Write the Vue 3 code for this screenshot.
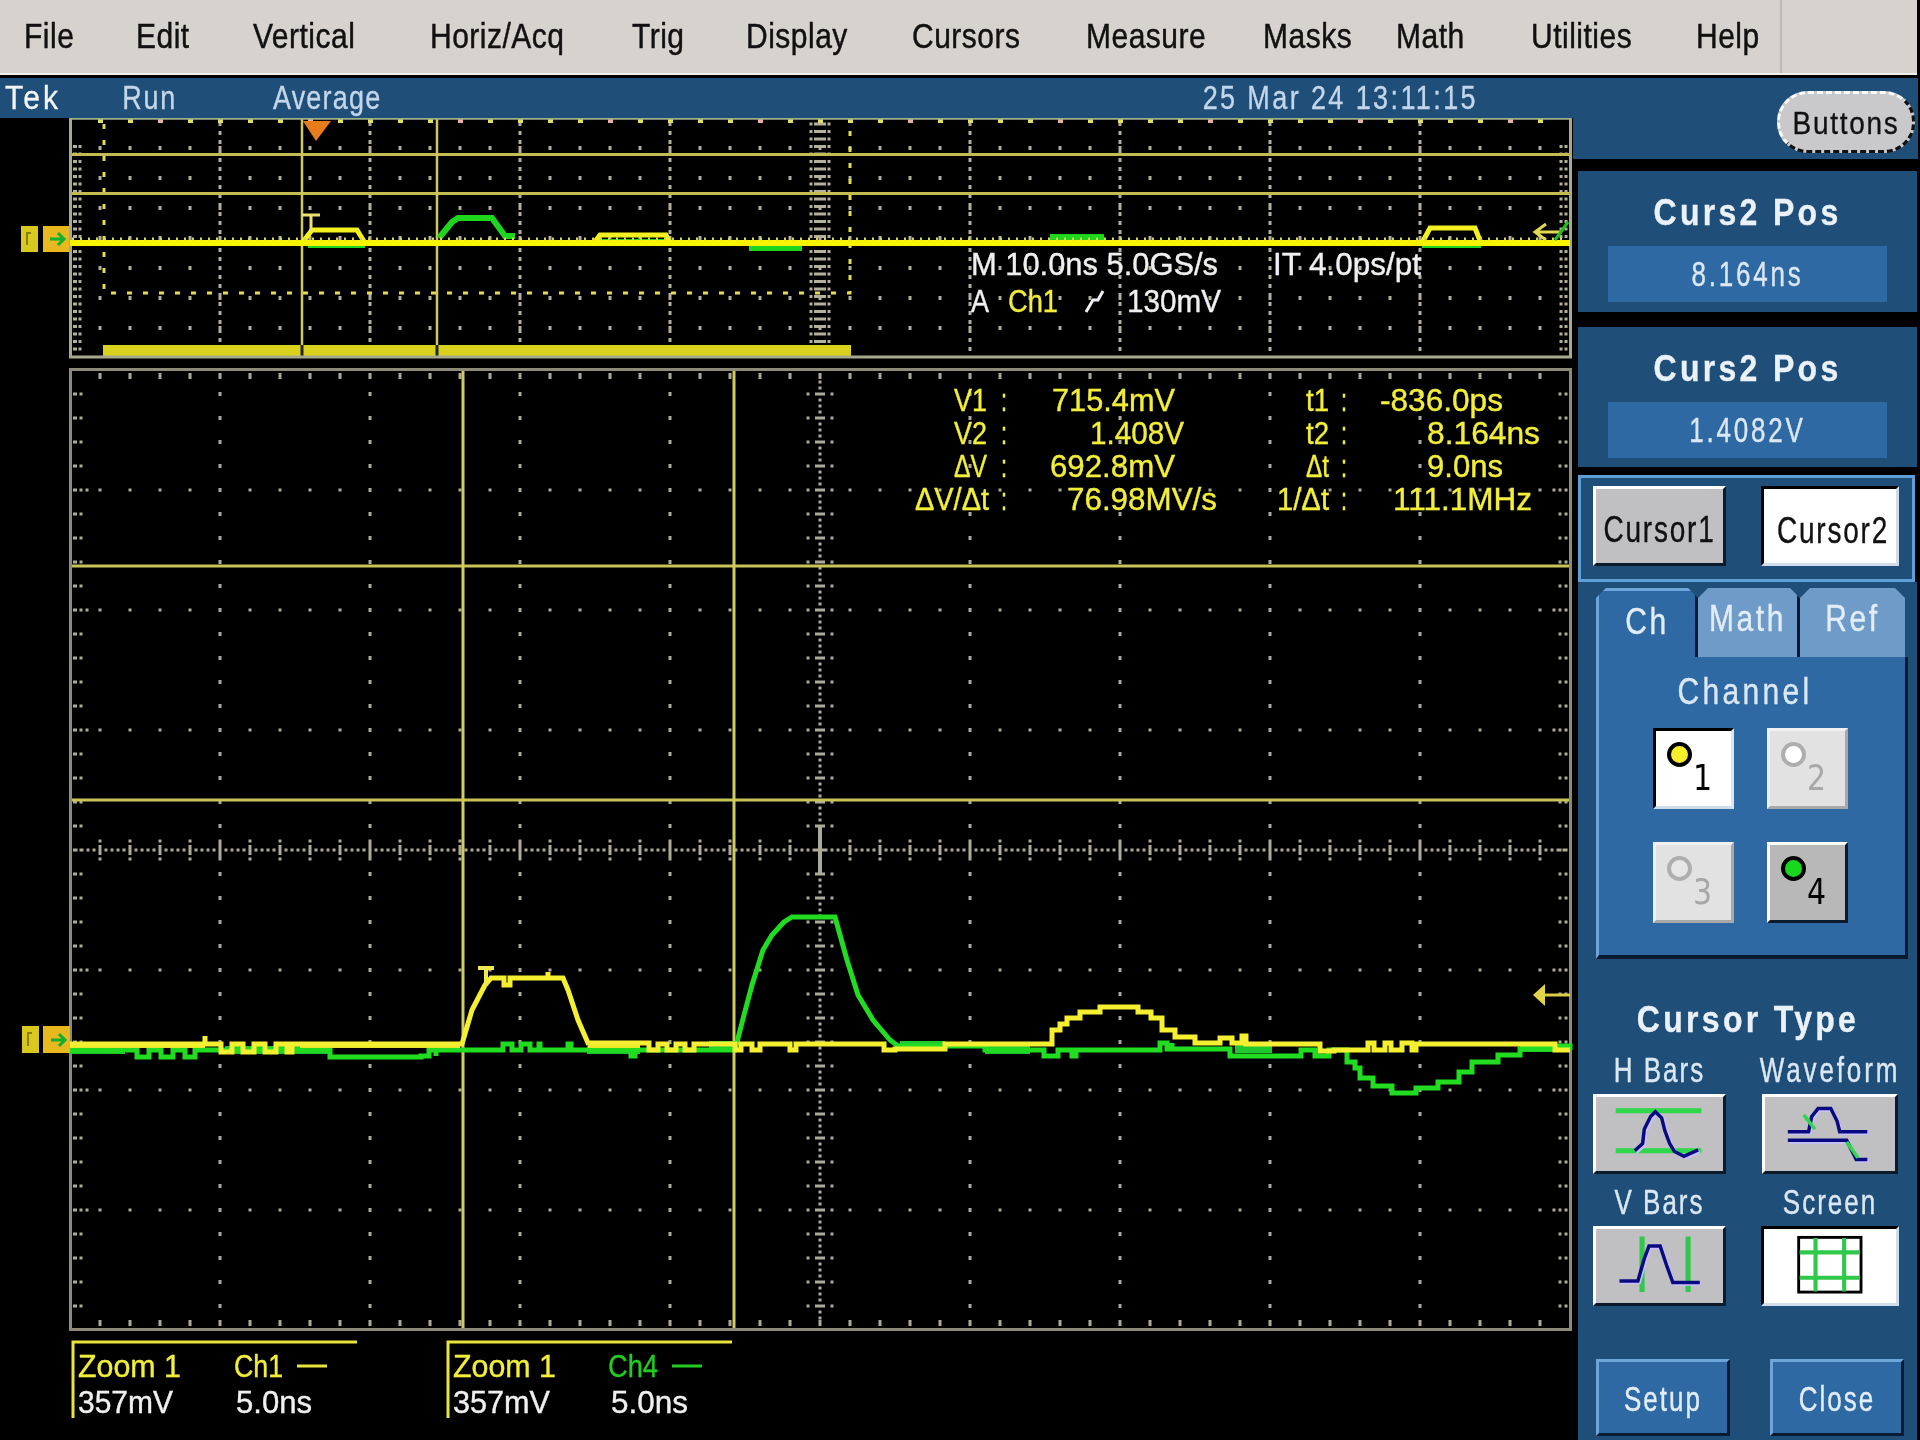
<script setup>
const menuItems = [
  { label: 'File', gap: 24, width: 47 },
  { label: 'Edit', gap: 65, width: 53 },
  { label: 'Vertical', gap: 64, width: 105 },
  { label: 'Horiz/Acq', gap: 72, width: 136 },
  { label: 'Trig', gap: 66, width: 52 },
  { label: 'Display', gap: 62, width: 103 },
  { label: 'Cursors', gap: 63, width: 111 },
  { label: 'Measure', gap: 63, width: 124 },
  { label: 'Masks', gap: 53, width: 87 },
  { label: 'Math', gap: 46, width: 70 },
  { label: 'Utilities', gap: 65, width: 101 },
  { label: 'Help', gap: 64, width: 62 }
]

const range = (a, b, s) => {
  const out = []
  for (let v = a; v <= b + 0.01; v += s) out.push(v)
  return out
}
const dot = (x, y, w = 3, h = 3) => `M${x - w / 2} ${y - h / 2}h${w}v${h}h${-w}z`

// top (overview) graticule
const topDots = (() => {
  let d = ''
  for (const y of range(148, 328, 30)) {
    for (const x of range(100, 1550, 30)) d += dot(x, y, 3, 4)
  }
  for (const x of range(70, 1570, 150)) {
    if (x === 70 || x === 1570 || x === 820) continue
    for (const y of range(124, 354, 9)) d += dot(x, y, 3, 4)
  }
  for (const y of range(124, 352, 7.5)) {
    if (y > 145) {
      d += dot(75, y, 4, 3) + dot(80, y, 3, 3)
      d += dot(1561, y, 3, 3) + dot(1566, y, 3, 3)
    }
    d += dot(811, y, 3, 3) + dot(829, y, 3, 3) + dot(820, y, 12, 3)
  }
  return d
})()
const topEdge = range(100, 1550, 30).map((x, i) => ({ x, c: i % 5 === 2 ? '#e8b0a0' : '#e0e060' }))

// zoomed graticule
const mainDots = (() => {
  let d = ''
  for (const y of [490, 610, 730, 970, 1090, 1210]) {
    for (const x of range(100, 1550, 30)) d += dot(x, y, 3, 3)
  }
  for (const x of range(220, 1420, 150)) {
    if (x === 820) continue
    for (const y of range(394, 1306, 24)) d += dot(x, y, 3, 4)
  }
  for (const y of range(394, 1306, 24)) {
    d += dot(75, y, 4, 3) + dot(81, y, 3, 3)
    d += dot(1560, y, 3, 3) + dot(1566, y, 3, 3)
    d += dot(808, y, 3, 3) + dot(832, y, 3, 3) + dot(820, y, 10, 3)
  }
  for (const y of [490, 610, 730, 970, 1090, 1210]) {
    d += dot(75, y, 3, 3) + dot(81, y, 3, 3) + dot(87, y, 3, 3)
    d += dot(1554, y, 3, 3)
  }
  for (const x of range(100, 1550, 30)) {
    d += dot(x, 376, 3, 6) + dot(x, 1323, 3, 6)
  }
  for (const x of range(76, 1564, 6)) d += dot(x, 850, 3, 3)
  for (const x of range(100, 1540, 30)) {
    d += dot(x, 850, 3, 10) + dot(x, 841, 3, 3) + dot(x, 859, 3, 3)
  }
  for (const x of range(220, 1420, 150)) for (const y of [844, 856]) d += dot(x, y, 3, 8)
  for (const y of range(376, 1324, 6)) d += dot(820, y, 3, 3)
  d += dot(820, 838, 4, 22) + dot(820, 862, 4, 26)
  return d
})()

const jag = (x0, x1, y0, y1, w) => {
  let d = ''
  let up = true
  for (let x = x0; x < x1; x += w) {
    d += `H${Math.min(x + w, x1)}V${up ? y1 : y0}`
    up = !up
  }
  return d + `H${x1}V${y0}`
}
const stairs = (pts) => pts.map(([x, y]) => `H${x}V${y}`).join('')
const line = (pts) => pts.map(([x, y]) => `L${x} ${y}`).join('')

const greenMain =
  'M70 1050H125' + jag(125, 195, 1050, 1057, 12) + 'H330V1057H413' + jag(413, 436, 1050, 1056, 8) +
  'H494' + jag(494, 540, 1050, 1044, 9) + 'H568V1044H571V1050H631V1056H635V1050H735' +
  line([[744, 1015], [752, 985], [763, 950], [772, 935], [784, 922], [792, 917], [835, 917], [847, 960], [858, 995], [873, 1020], [890, 1040], [898, 1046]]) +
  'H985V1050H1030' + jag(1030, 1076, 1050, 1056, 14) + 'H1153' + jag(1153, 1172, 1049, 1043, 7) + 'H1230V1056H1273' +
  jag(1273, 1329, 1050, 1056, 14) +
  stairs([[1347, 1062], [1355, 1068], [1360, 1078], [1373, 1086], [1392, 1093], [1416, 1088], [1438, 1082], [1459, 1072], [1472, 1062], [1498, 1055], [1520, 1049], [1558, 1046], [1570, 1050]])

const greenBands = 'M70 1050H125M225 1050H330M587 1050H640M709 1045H735M900 1045H945M985 1050H1030M1235 1049H1272M1520 1048H1556'

const yellowMain =
  'M70 1044H205V1036V1044H210' + jag(210, 292, 1044, 1052, 11) + 'H300V1044H462' +
  line([[472, 1010], [485, 985], [491, 978]]) + 'H504V985H510V978H548V972V978H563' +
  line([[568, 990], [578, 1020], [588, 1043]]) + 'H640' + jag(640, 694, 1044, 1050, 9) + 'H735' +
  'V1050H741V1044H752V1050H760V1044H790V1050H796V1044H884V1050H895V1049H945V1044H1043' +
  stairs([[1052, 1030], [1060, 1024], [1067, 1018], [1080, 1012], [1100, 1007], [1138, 1012], [1151, 1018], [1162, 1030], [1175, 1037], [1195, 1043]]) +
  'H1220V1038H1232V1043H1242V1036H1246V1044H1320V1051H1334V1050H1368V1043H1374V1050H1385V1043H1391V1050H1402V1043H1412V1050H1416V1044H1555V1050H1570'
const yellowBands = 'M70 1045H205M300 1045H460M588 1045H640'

const topYellow = 'M70 243H1570'
const topPulses = [
  'M302 243L312 230H357L365 243',
  'M594 243L600 235H666L670 243',
  'M1422 243L1430 228H1475L1481 243'
]
const topGreen = [
  'M308 245H365',
  'M439 238L452 222L458 218H492L505 236H515',
  'M594 242H666',
  'M749 248H802',
  'M1050 237H1104',
  'M1422 245H1481'
]

const hudWhite = [
  { t: 'M 10.0ns 5.0GS/s', x: 971, y: 275, w: 247 },
  { t: 'IT 4.0ps/pt', x: 1273, y: 275, w: 148 },
  { t: 'A', x: 971, y: 312, w: 18 },
  { t: '130mV', x: 1127, y: 312, w: 94 },
  { t: '357mV', x: 78, y: 1413, w: 95 },
  { t: '5.0ns', x: 236, y: 1413, w: 76 },
  { t: '357mV', x: 453, y: 1413, w: 97 },
  { t: '5.0ns', x: 611, y: 1413, w: 77 }
]
const hudYellow = [
  { t: 'Ch1', x: 1008, y: 312, w: 50 },
  { t: 'V1', x: 954, y: 411, w: 33 },
  { t: ':', x: 1001, y: 411, w: 6 },
  { t: '715.4mV', x: 1052, y: 411, w: 123 },
  { t: 't1', x: 1306, y: 411, w: 23 },
  { t: ':', x: 1341, y: 411, w: 6 },
  { t: '-836.0ps', x: 1380, y: 411, w: 123 },
  { t: 'V2', x: 954, y: 444, w: 33 },
  { t: ':', x: 1001, y: 444, w: 6 },
  { t: '1.408V', x: 1090, y: 444, w: 94 },
  { t: 't2', x: 1306, y: 444, w: 23 },
  { t: ':', x: 1341, y: 444, w: 6 },
  { t: '8.164ns', x: 1427, y: 444, w: 113 },
  { t: 'ΔV', x: 954, y: 477, w: 33 },
  { t: ':', x: 1001, y: 477, w: 6 },
  { t: '692.8mV', x: 1050, y: 477, w: 125 },
  { t: 'Δt', x: 1306, y: 477, w: 23 },
  { t: ':', x: 1341, y: 477, w: 6 },
  { t: '9.0ns', x: 1427, y: 477, w: 76 },
  { t: 'ΔV/Δt', x: 915, y: 510, w: 74 },
  { t: ':', x: 1001, y: 510, w: 6 },
  { t: '76.98MV/s', x: 1067, y: 510, w: 150 },
  { t: '1/Δt', x: 1277, y: 510, w: 52 },
  { t: ':', x: 1341, y: 510, w: 6 },
  { t: '111.1MHz', x: 1393, y: 510, w: 139 },
  { t: 'Zoom 1', x: 78, y: 1377, w: 103 },
  { t: 'Ch1', x: 234, y: 1377, w: 49 },
  { t: 'Zoom 1', x: 453, y: 1377, w: 103 }
]
</script>

<template>
  <div class="scope">
    <nav class="menu">
      <span
        v-for="item in menuItems"
        :key="item.label"
        class="menu-item"
        :style="{ marginLeft: item.gap + 'px', width: item.width + 'px' }"
      ><span class="menu-text">{{ item.label }}</span></span>
      <span class="menu-sep"></span>
    </nav>

    <div class="work">
      <section class="display">
        <header class="status">
          <span class="st tek">Tek</span>
          <span class="st run">Run</span>
          <span class="st avg">Average</span>
          <span class="st date">25 Mar 24 13:11:15</span>
        </header>

        <svg class="screen" viewBox="0 118 1573 1322" width="1573" height="1322">
          <!-- overview graticule -->
          <path :d="topDots" fill="#b4b09c" />
          <rect v-for="e in topEdge" :key="e.x" :x="e.x - 2" y="119" width="5" height="4" :fill="e.c" />
          <path d="M104 124V293H850V124" fill="none" stroke="#e4dc50" stroke-width="3" stroke-dasharray="5 11" />
          <rect x="103" y="345" width="748" height="13" fill="#d8d21e" />
          <path d="M70 154.5H1570M70 193.5H1570" stroke="#c4bc50" stroke-width="3" />
          <path d="M302 118V358M437 118V358" stroke="#cfc860" stroke-width="2.5" />
          <path d="M302 345V358M437 345V358" stroke="#222" stroke-width="3" />
          <path d="M303 121H331L316 141Z" fill="#e87c1c" />
          <rect x="70.5" y="118" width="1500" height="239" fill="none" stroke="#a8a88c" stroke-width="3" />
          <path d="M69 118H1572" stroke="#9cb08c" stroke-width="3" />

          <path v-for="d in topGreen" :key="d" :d="d" fill="none" stroke="#1fd61f" stroke-width="6" />
          <path v-for="d in topPulses" :key="d" :d="d" fill="none" stroke="#f5f020" stroke-width="5" />
          <path :d="topYellow" stroke="#f8f400" stroke-width="6" />
          <path d="M72 239H1568" stroke="#d8d850" stroke-width="3" stroke-dasharray="2 6" />
          <path d="M302 215H320M311 215V232" stroke="#eee070" stroke-width="3" />
          <path d="M1535 232H1562M1546 224L1535 232L1546 240" fill="none" stroke="#e4d850" stroke-width="3" />
          <path d="M1555 240L1568 222" stroke="#22c022" stroke-width="3" />

          <rect x="21" y="226" width="17" height="26" fill="#d8c820" />
          <rect x="43" y="226" width="26" height="26" fill="#e8b820" />
          <path d="M31 233H27V245" fill="none" stroke="#8a8010" stroke-width="2" />
          <path d="M50 239H64M58 233L64 239L58 245" fill="none" stroke="#10b030" stroke-width="3" />

          <!-- zoom graticule -->
          <path :d="mainDots" fill="#aeaa98" />
          <path d="M70 566H1570M70 800H1570" stroke="#c8c458" stroke-width="3" />
          <path d="M463 369V1330M734 369V1330" stroke="#d0cc60" stroke-width="3" />
          <rect x="70.5" y="369.5" width="1500" height="960" fill="none" stroke="#8e8a78" stroke-width="3" />

          <path :d="greenBands" fill="none" stroke="#1fc82f" stroke-width="8" />
          <path :d="greenMain" fill="none" stroke="#22dc22" stroke-width="5" />
          <path :d="yellowBands" fill="none" stroke="#e8e828" stroke-width="6" />
          <path :d="yellowMain" fill="none" stroke="#f4ef30" stroke-width="5" />
          <path d="M478 968H494M486 968V985" stroke="#f0e850" stroke-width="4" />

          <rect x="22" y="1026" width="17" height="27" fill="#d8c820" />
          <rect x="43" y="1026" width="27" height="27" fill="#e8b820" />
          <path d="M32 1033H28V1046" fill="none" stroke="#8a8010" stroke-width="2" />
          <path d="M51 1040H65M59 1034L65 1040L59 1046" fill="none" stroke="#10b030" stroke-width="3" />
          <path d="M1545 995H1570" stroke="#d8cc48" stroke-width="3" />
          <path d="M1533 995L1545 984V1006Z" fill="#e0d448" />

          <!-- readouts -->
          <g class="hud">
            <text
              v-for="h in hudWhite"
              :key="h.t + h.x"
              :x="h.x"
              :y="h.y"
              :textLength="h.w"
              lengthAdjust="spacingAndGlyphs"
              fill="#f0f0f0"
              stroke="#f0f0f0"
            >{{ h.t }}</text>
            <text
              v-for="h in hudYellow"
              :key="h.t + h.x + h.y"
              :x="h.x"
              :y="h.y"
              :textLength="h.w"
              lengthAdjust="spacingAndGlyphs"
              fill="#f2ee3a"
              stroke="#f2ee3a"
            >{{ h.t }}</text>
            <text x="608" y="1377" textLength="50" lengthAdjust="spacingAndGlyphs" fill="#22cc22" stroke="#22cc22">Ch4</text>
          </g>
          <path d="M1086 312L1093 300L1098 300L1103 291" fill="none" stroke="#f0f0f0" stroke-width="3" />

          <path d="M73 1418V1342H357M448 1418V1342H732" fill="none" stroke="#e8e43c" stroke-width="3" />
          <path d="M297 1366H327" stroke="#e8e43c" stroke-width="3" />
          <path d="M672 1366H702" stroke="#22cc22" stroke-width="3" />
        </svg>
      </section>

      <aside class="side">
        <div class="side-head">
          <div class="pill"><span class="txt pill-text">Buttons</span></div>
        </div>

        <div class="readout first">
          <div class="title"><span class="txt title-text">Curs2 Pos</span></div>
          <div class="value"><span class="txt value-text">8.164ns</span></div>
        </div>
        <div class="readout second">
          <div class="title"><span class="txt title-text">Curs2 Pos</span></div>
          <div class="value"><span class="txt value-text">1.4082V</span></div>
        </div>

        <div class="cursor-row">
          <button class="btn raised cursor-btn"><span class="txt btn-text">Cursor1</span></button>
          <button class="btn pressed cursor-btn wide"><span class="txt btn-text low">Cursor2</span></button>
        </div>

        <div class="lower">
          <div class="tabs">
            <div class="tab active"><span class="txt tab-text">Ch</span></div>
            <div class="tab math"><span class="txt tab-text">Math</span></div>
            <div class="tab ref"><span class="txt tab-text">Ref</span></div>
          </div>
          <div class="tab-body">
            <div class="channel"><span class="txt chan-text">Channel</span></div>
            <div class="chan-grid">
              <div class="chan on">
                <i class="lamp yellow"></i><b class="num">1</b>
              </div>
              <div class="chan off">
                <i class="lamp blank"></i><b class="num">2</b>
              </div>
              <div class="chan off">
                <i class="lamp blank dim"></i><b class="num">3</b>
              </div>
              <div class="chan active4">
                <i class="lamp green"></i><b class="num">4</b>
              </div>
            </div>
          </div>

          <div class="type-title"><span class="txt title-text">Cursor Type</span></div>

          <div class="type-grid">
            <div class="cell">
              <div class="cap"><span class="txt cap-text">H Bars</span></div>
              <button class="btn raised icon-btn">
                <svg viewBox="0 0 400 240" width="133" height="80">
                  <path d="M62 47H332M62 173H332" stroke="#2fd84a" stroke-width="16" />
                  <path d="M122 173L147 150L152 105L172 65L187 50L207 70L217 110L232 150L247 175L277 190L322 170" fill="none" stroke="#c8c0ff" stroke-width="11" transform="translate(5 5)" />
                  <path d="M122 173L147 150L152 105L172 65L187 50L207 70L217 110L232 150L247 175L277 190L322 170" fill="none" stroke="#0a0a80" stroke-width="11" />
                </svg>
              </button>
            </div>
            <div class="cell">
              <div class="cap"><span class="txt cap-text wave">Waveform</span></div>
              <button class="btn raised icon-btn">
                <svg viewBox="0 0 409 240" width="136" height="80">
                  <path d="M72 113H137L147 65L167 40H207L227 80L235 113H322M72 140H257L287 200H322" fill="none" stroke="#c8c0ff" stroke-width="11" transform="translate(4 5)" />
                  <path d="M72 113H137L147 65L167 40H207L227 80L235 113H322M72 140H257L287 200H322" fill="none" stroke="#0a0a80" stroke-width="11" />
                  <path d="M122 60L157 105M257 145L292 195" stroke="#2fd84a" stroke-width="11" />
                </svg>
              </button>
            </div>
            <div class="cell">
              <div class="cap"><span class="txt cap-text">V Bars</span></div>
              <button class="btn raised icon-btn">
                <svg viewBox="0 0 400 240" width="133" height="80">
                  <path d="M145 27V202M290 27V202" stroke="#2fc84a" stroke-width="16" />
                  <path d="M74 167H132L152 97L167 57H202L222 117L242 172H327" fill="none" stroke="#c8c0ff" stroke-width="11" transform="translate(4 5)" />
                  <path d="M74 167H132L152 97L167 57H202L222 117L242 172H327" fill="none" stroke="#0a0a80" stroke-width="11" />
                </svg>
              </button>
            </div>
            <div class="cell">
              <div class="cap"><span class="txt cap-text">Screen</span></div>
              <button class="btn pressed icon-btn screen-btn">
                <svg viewBox="0 0 415 240" width="138" height="80">
                  <rect x="109" y="30" width="196" height="172" fill="#fff" stroke="#000" stroke-width="9" />
                  <path d="M162 32V200M252 32V200M112 77H302M112 157H302" stroke="#2fc84a" stroke-width="13" />
                </svg>
              </button>
            </div>
          </div>

          <div class="bottom-row">
            <button class="blue-btn"><span class="txt blue-text">Setup</span></button>
            <button class="blue-btn"><span class="txt blue-text">Close</span></button>
          </div>
        </div>
      </aside>
    </div>
  </div>
</template>

<style>
html, body { margin: 0; background: #000; }
</style>

<style scoped>
.scope {
  width: 1920px;
  height: 1440px;
  background: #000;
  overflow: hidden;
  font-family: "Liberation Sans", Arial, sans-serif;
  filter: blur(0.6px);
}
.txt { display: inline-block; white-space: nowrap; -webkit-text-stroke: 0.3px currentColor; }

.menu {
  position: relative;
  box-sizing: border-box;
  display: flex;
  align-items: center;
  width: 1917px;
  height: 75px;
  background: #d6d3ce;
  border-bottom: 2px solid #f2f0ec;
}
.menu-item { display: block; white-space: nowrap; flex: none; }
.menu-text {
  display: inline-block;
  font-size: 30px;
  letter-spacing: 0.5px;
  color: #111;
  -webkit-text-stroke: 0.4px #111;
  transform: scaleY(1.14);
}
.menu-sep {
  position: absolute;
  left: 1780px;
  top: 0;
  bottom: 0;
  width: 2px;
  background: #bdbab5;
}

.work { display: flex; margin-top: 3px; }
.display { width: 1573px; flex: none; }
.status {
  display: flex;
  align-items: center;
  height: 40px;
  background: #1f4e79;
  padding-left: 5px;
  overflow: visible;
}
.st { display: inline-block; white-space: nowrap; font-size: 27px; transform: scaleY(1.2); color: #c3d6ea; -webkit-text-stroke: 0.3px currentColor; }
.tek { font-size: 30px; letter-spacing: 3.2px; color: #f2f4f6; transform: scaleY(1.1); }
.run { margin-left: 61px; letter-spacing: 1.7px; }
.avg { margin-left: 96px; letter-spacing: 1.2px; }
.date { margin-left: auto; margin-right: 95px; letter-spacing: 2.4px; }
.screen { display: block; }
.hud text { font-family: "Liberation Sans", Arial, sans-serif; font-size: 32px; stroke-width: 0.4px; }

.side { width: 347px; flex: none; }
.side-head {
  box-sizing: border-box;
  height: 81px;
  width: 345px;
  background: #1f4e79;
  display: flex;
  justify-content: flex-end;
  padding: 13px 3px 0 0;
}
.pill {
  box-sizing: border-box;
  width: 138px;
  height: 62px;
  border-radius: 31px / 30px;
  background: #c9c8ca;
  border: 3px dashed #fff;
  border-bottom-color: #111;
  border-right-color: #111;
  display: flex;
  align-items: center;
  justify-content: center;
  padding-top: 4px;
}
.pill-text { font-size: 28px; letter-spacing: 1.7px; color: #111; transform: scaleY(1.15); }

.readout {
  box-sizing: border-box;
  margin-left: 5px;
  width: 339px;
  background: #1f4e79;
  display: flex;
  flex-direction: column;
  align-items: center;
}
.first { margin-top: 12px; height: 141px; }
.second { margin-top: 15px; height: 140px; }
.title { height: 75px; display: flex; align-items: center; justify-content: center; padding-top: 7px; box-sizing: border-box; }
.title-text {
  font-size: 32px;
  font-weight: 700;
  letter-spacing: 3.3px;
  color: #eaf1f8;
  transform: scaleY(1.18);
}
.value {
  width: 279px;
  height: 56px;
  background: #2f69a4;
  display: flex;
  align-items: center;
  justify-content: center;
}
.value-text { font-size: 26px; letter-spacing: 2.8px; color: #dbe7f3; transform: scaleY(1.34); }

.cursor-row {
  box-sizing: border-box;
  margin: 8px 0 0 5px;
  width: 337px;
  height: 107px;
  background: #1f4e79;
  border: 3px solid #5f9fd8;
  display: flex;
  align-items: flex-start;
  padding: 8px 0 0 12px;
  gap: 35px;
}
.btn {
  box-sizing: border-box;
  padding: 0;
  font-family: inherit;
  display: flex;
  align-items: center;
  justify-content: center;
}
.raised {
  background: #c0bfc2;
  border: 3px solid;
  border-color: #fff #0c1a2c #0c1a2c #fff;
}
.pressed {
  background: #fff;
  border: 3px solid;
  border-color: #000 #cfdceb #cfdceb #000;
}
.cursor-btn { width: 133px; height: 80px; padding-top: 8px; }
.cursor-btn.wide { width: 138px; height: 80px; padding: 10px 0 0 6px; }
.btn-text { font-size: 28px; letter-spacing: 1.8px; color: #111; transform: scaleY(1.3); }

.lower {
  box-sizing: border-box;
  margin-left: 5px;
  width: 339px;
  height: 858px;
  background: #1f4e79;
  padding: 6px 0 0 18px;
}
.tabs { display: flex; width: 309px; height: 69px; }
.tab {
  box-sizing: border-box;
  height: 69px;
  display: flex;
  justify-content: center;
  padding-top: 14px;
  background: #6e9bc8;
  clip-path: polygon(10px 0, calc(100% - 10px) 0, 100% 10px, 100% 100%, 0 100%, 0 10px);
}
.tab.active {
  width: 102px;
  background: #2f69a4;
  border-left: 3px solid #6ea5d8;
  border-top: 3px solid #6ea5d8;
  border-right: 3px solid #0a1a30;
}
.tab.math { width: 102px; border-right: 3px solid #0a1a30; }
.tab.ref { width: 105px; }
.tab-text { font-size: 30px; letter-spacing: 2.6px; color: #e2edf7; transform: scaleY(1.2); height: 34px; line-height: 34px; }

.tab-body {
  box-sizing: border-box;
  width: 312px;
  height: 302px;
  background: #2f69a4;
  border-left: 3px solid #6ea5d8;
  border-right: 3px solid #0a1a30;
  border-bottom: 4px solid #0a1a30;
  padding-top: 18px;
}
.channel { display: flex; justify-content: center; height: 36px; padding-right: 14px; }
.chan-text { font-size: 30px; letter-spacing: 3.3px; color: #dbe8f4; transform: scaleY(1.2); }
.chan-grid {
  display: grid;
  grid-template-columns: 81px 81px;
  grid-auto-rows: 81px;
  column-gap: 33px;
  row-gap: 33px;
  margin: 17px 0 0 54px;
}
.chan { position: relative; box-sizing: border-box; border: 3px solid; }
.chan.on { background: #fff; border-color: #000 #dce6f0 #cfdceb #000; }
.chan.off { background: #e2e2e2; border-color: #f0f0f0 #a8a8a8 #a8a8a8 #f0f0f0; }
.chan.active4 { background: #b8b8b8; border-color: #fff #0c1a2c #0c1a2c #fff; }
.lamp {
  position: absolute;
  left: 11px;
  top: 11px;
  width: 25px;
  height: 25px;
  border-radius: 50%;
  box-sizing: border-box;
  border: 4px solid #000;
}
.yellow { background: #f7ee2a; }
.green { background: #17d81f; }
.blank { background: #fff; border-color: #aeaeae; }
.dim { background: #e6e6e6; }
.num {
  position: absolute;
  left: 37px;
  top: 30px;
  font-family: "DejaVu Sans", sans-serif;
  font-weight: 400;
  font-size: 30px;
  line-height: 34px;
  color: #000;
  transform: scaleY(1.2);
}
.off .num { color: #a8a8a8; }

.type-title { display: flex; justify-content: center; width: 278px; margin: 43px 0 0 13px; height: 44px; }
.type-grid {
  display: grid;
  grid-template-columns: 133px 138px;
  column-gap: 35px;
  margin: 0 0 0 -3px;
  row-gap: 4px;
}
.cell { display: flex; flex-direction: column; align-items: center; }
.cap { height: 48px; display: flex; align-items: center; justify-content: center; }
.cap-text { font-size: 26px; letter-spacing: 2px; color: #dbe8f4; transform: scaleY(1.36); }
.cap-text.wave { letter-spacing: 2.9px; }
.icon-btn { width: 133px; height: 80px; }
.cell:nth-child(2) .icon-btn { width: 136px; }
.screen-btn { width: 138px; }
.bottom-row { display: flex; gap: 40px; margin-top: 53px; }
.blue-btn {
  box-sizing: border-box;
  width: 134px;
  height: 77px;
  padding: 3px 0 0;
  background: #2f69a4;
  border: 3px solid;
  border-color: #6ea5d8 #0a1a30 #0a1a30 #6ea5d8;
  font-family: inherit;
  display: flex;
  align-items: center;
  justify-content: center;
}
.blue-text { font-size: 26px; letter-spacing: 2px; color: #e2edf7; transform: scaleY(1.34); }
</style>
